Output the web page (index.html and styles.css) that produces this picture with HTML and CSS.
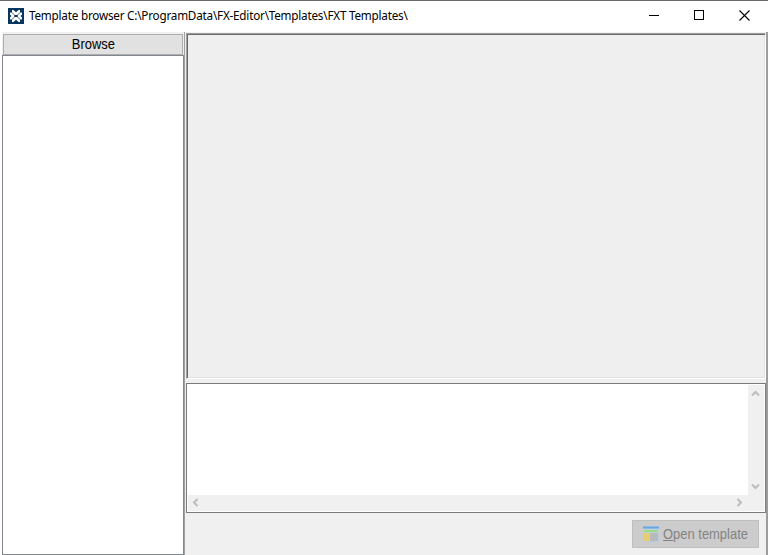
FILE: index.html
```
<!DOCTYPE html>
<html lang="en">
<head>
<meta charset="utf-8">
<title>Template browser</title>
<link rel="stylesheet" href="styles.css">
</head>
<body>
<div class="window">
  <header class="titlebar">
    <svg class="logo" width="16" height="16" viewBox="0 0 16 16">
      <path fill="#06365f" d="M0 0h16v16H0z"/>
      <path fill="#fff" d="M4 2h1.500L8 4.200 10.500 2H12v2.200L9.200 7H6.800L4 4.200zM4 14h1.500L8 11.800l2.500 2.200H12v-2.200L9.200 9H6.800L4 11.800zM2 4.500h1.500L6.300 7.200v1.600L3.500 11.500H2v-2L3.400 8 2 6.500zM14 4.500h-1.500L9.700 7.200v1.600l2.800 2.700H14v-2L12.600 8 14 6.500z"/>
    </svg>
    <h1 class="title">Template browser C:\ProgramData\FX-Editor\Templates\FXT Templates\</h1>
    <div class="controls">
      <svg width="10" height="11" viewBox="0 0 10 11" shape-rendering="crispEdges"><path d="M0 5.500h10" stroke="#000"/></svg>
      <svg width="10" height="11" viewBox="0 0 10 11" shape-rendering="crispEdges"><path d="M.5.5h9v9h-9z" fill="none" stroke="#000"/></svg>
      <svg width="11" height="11" viewBox="0 0 11 11"><path d="M.5.5l10 10M10.500.5l-10 10" stroke="#000" stroke-width="1.100"/></svg>
    </div>
  </header>
  <main class="content">
    <aside class="sidebar">
      <button class="browse"><span class="label">Browse</span></button>
      <div class="list"></div>
    </aside>
    <div class="splitter"></div>
    <section class="details">
      <div class="preview"></div>
      <div class="memo">
        <div class="text"></div>
        <div class="vbar">
          <svg width="9" height="7" viewBox="0 0 9 7"><path d="M1 5.500L4.500 2 8 5.500"/></svg>
          <svg width="9" height="7" viewBox="0 0 9 7"><path d="M1 1.500L4.500 5 8 1.500"/></svg>
        </div>
        <div class="hbar">
          <svg width="7" height="9" viewBox="0 0 7 9"><path d="M5.500 1L2 4.500 5.500 8"/></svg>
          <svg width="7" height="9" viewBox="0 0 7 9"><path d="M1.500 1L5 4.500 1.500 8"/></svg>
        </div>
      </div>
      <footer class="actions">
        <button class="open" disabled>
          <svg width="16" height="16" viewBox="0 0 16 16" shape-rendering="crispEdges">
            <path fill="#8bbce6" d="M0 0h16v3H0z"/><path fill="#6ca6da" d="M0 1h16v1H0z"/>
            <path fill="#c0d0dc" d="M0 3h16v4H0z"/><path fill="#9bdc83" d="M1 4h14v2H1z"/>
            <path fill="#b9cddd" d="M0 7h16v9H0z"/><path fill="#e8cd70" d="M1 7h5v8H1z"/>
            <path fill="#d0d0d0" d="M6 7h1v8H6z"/><path fill="#b9b9b9" d="M7 7h8v8H7z"/>
          </svg>
          <span class="label"><u>O</u>pen template</span>
        </button>
      </footer>
    </section>
    <div class="edge"></div>
  </main>
</div>
</body>
</html>
```
FILE: styles.css
```
* { box-sizing: border-box; }
body { margin: 0; background: #fff; overflow: hidden; }
button { margin: 0; padding: 0; border-radius: 0; }
svg { display: block; flex: none; }
.window { width: 768px; height: 555px; display: flex; flex-direction: column; border-top: 1px solid #6b6b6b; }
.titlebar { height: 31px; flex: none; display: flex; align-items: center; padding: 0 18px 2px 8px; }
.title { margin: 0 0 0 5px; font: 400 11.7px/15px "Noto Sans", sans-serif; letter-spacing: -0.21px; color: #000; white-space: nowrap; }
.controls { display: flex; gap: 35px; margin-left: auto; }
.content { flex: 1; display: grid; grid-template-columns: 182px 2px 580px 2px; padding-left: 2px; min-height: 0; }
.sidebar { display: flex; flex-direction: column; padding-top: 1px; min-height: 0; background: #f0f0f0; }
.browse { height: 21px; flex: none; margin: 1px 1px 0; border: 1px solid #adadad; background: #e1e1e1; color: #000; font: 14px/19px "Liberation Sans", sans-serif; }
.list { flex: 1; border: 1px solid #828790; background: #fff; }
.splitter { background: linear-gradient(90deg, #a0a0a0 50%, #f0f0f0 50%); }
.details { display: flex; flex-direction: column; padding-top: 1px; background: #f0f0f0; min-width: 0; }
.preview { height: 346px; flex: none; border: 1px solid; border-color: #a0a0a0 #fff #fff #a0a0a0; box-shadow: inset 1px 1px #696969, inset -1px -1px #e3e3e3; background: #efefef; }
.memo { height: 130px; flex: none; margin-top: 4px; border: 1px solid #7a7a7a; padding: 1px; background: #fff; display: grid; grid-template: 1fr 16px / 1fr 16px; }
.vbar, .hbar { background: #f0f0f0; display: flex; align-items: center; justify-content: space-between; }
.vbar { flex-direction: column; padding: 5px 1px 5px 0; }
.hbar { grid-column: 1 / -1; padding: 0 21px 1px 4px; }
.memo path { fill: none; stroke: #bdbdbd; stroke-width: 2; }
.actions { flex: 1; display: flex; justify-content: flex-end; align-items: flex-start; padding: 7px 7px 0 0; }
.open { width: 127px; height: 28px; display: flex; align-items: center; padding-left: 10px; gap: 4px; border: 1px solid #bfbfbf; background: #ccc; color: #838383; font: 14px/18px "Liberation Sans", sans-serif; }
.open svg { opacity: 1; }
.label { display: inline-block; white-space: nowrap; transform: scaleX(0.925); }
.open .label { transform-origin: left; }
.edge { background: #9d9d9d; }
```
